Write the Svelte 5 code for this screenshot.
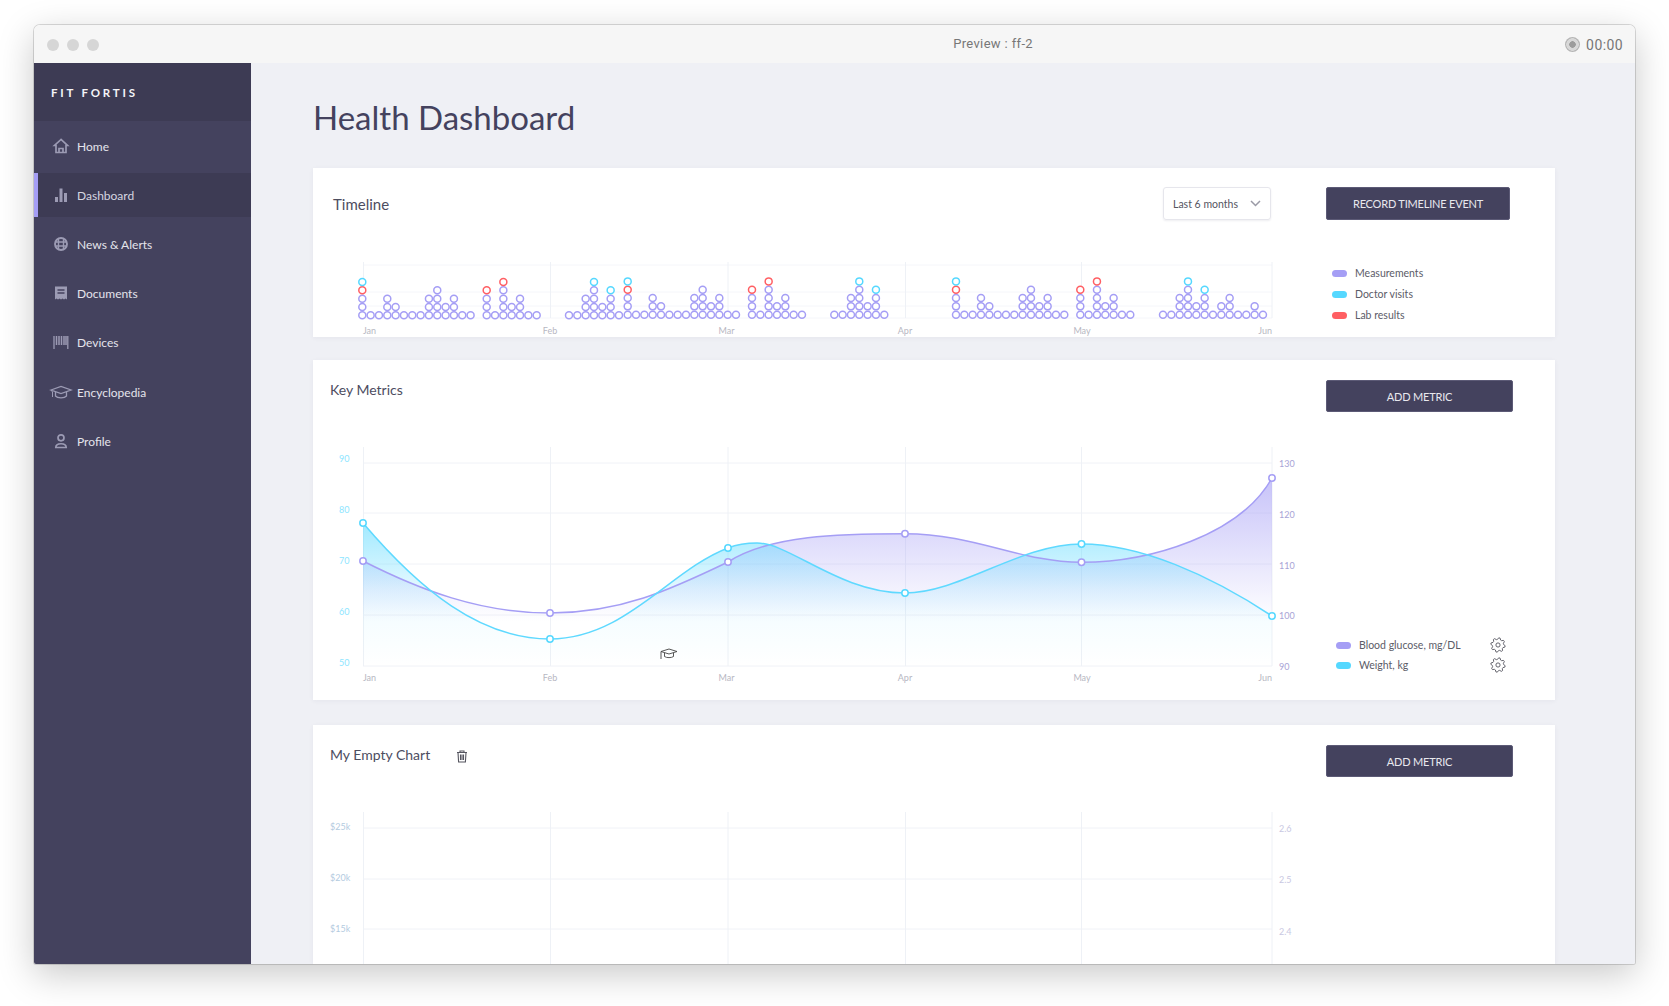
<script>
  const nav = ["Home", "Dashboard", "News & Alerts", "Documents", "Devices", "Encyclopedia", "Profile"];
  const months = [
    ["Jan", 363, "start"], ["Feb", 550, "middle"], ["Mar", 726.5, "middle"],
    ["Apr", 905, "middle"], ["May", 1082, "middle"], ["Jun", 1272, "end"]
  ];
  const gridX = [363.5, 550.5, 728, 905.5, 1081.5, 1272];

  const A = "3rc 1 1 3 2 1 1 1 3 4 2 3 1 1";
  const B = "3r 1 4r 2 3 1 1";
  const C = "1 1 3 4c 2 3c 1";
  const groups = [
    [362.3, 315.3, A], [486.7, 315.3, B], [569, 315.3, C],
    [627.7, 314.7, A], [752, 314.7, B], [834.3, 314.7, C],
    [956, 314.7, A], [1080.3, 314.7, B], [1163, 314.7, C + " 2 3 1 1 2 1"]
  ];
  const colors = { p: "#a59ef5", c: "#55d8ff", r: "#ff5f63" };
  const dots = [];
  for (const [sx, sy, pattern] of groups) {
    pattern.split(" ").forEach((col, i) => {
      const stack = "p".repeat(parseInt(col)) + col.replace(/\d/g, "");
      [...stack].forEach((k, j) => {
        dots.push({ x: sx + i * 8.33, y: sy - j * 8.33, color: colors[k] });
      });
    });
  }

  const purpleLine = "M363 561 C420 590 480 613 550 613 C620 613 670 590 728 562 C770 535 840 533.7 905 533.7 C975 533.7 1020 562.3 1081.5 562.3 C1150 562.3 1240 535 1272 478";
  const cyanLine = "M363 523 C420 590 480 639 550 639 C625 639 670 570 728 548 C738 544 748 543 757 543 C790 543 840 593 905 593 C960 593 1020 544 1081.5 544 C1140 544 1210 575 1272 616";
  const close = " L1272 666 L363 666 Z";
  const purplePts = [[363, 561], [550, 613], [728, 562], [905, 533.7], [1081.5, 562.3], [1272, 478]];
  const cyanPts = [[363, 523], [550, 639], [728, 548], [905, 593], [1081.5, 544], [1272, 616]];

  // eight-tooth gear outline
  const gearPts = [];
  for (let i = 0; i < 32; i++) {
    const a = ((i + 0.5) * Math.PI) / 16;
    const r = i % 4 < 2 ? 7.2 : 5.6;
    gearPts.push((8 + r * Math.cos(a)).toFixed(2) + "," + (8 + r * Math.sin(a)).toFixed(2));
  }
  const gearOutline = gearPts.join(" ");
</script>

{#snippet gear()}
  <svg class="gear" width="16" height="16" viewBox="0 0 16 16" fill="none" stroke="#55555f" stroke-width="0.9" stroke-linejoin="round">
    <circle cx="8" cy="8" r="2.100" />
    <polygon points={gearOutline} />
  </svg>
{/snippet}

{#snippet navIcon(name)}
  <svg class="nav-icon" width="24" height="16" viewBox="0 0 24 16" fill="none" stroke="#9c9bb4" stroke-width="1.700">
    {#if name === "Home"}
      <path d="M12 1.500 L5.500 7.500 H7 V14.500 H17 V7.500 H18.500 Z" />
      <path d="M10 14.500 V10.500 H14 V14.500" />
    {:else if name === "Dashboard"}
      <path d="M6 10h3v5H6zM10.500 1.500h3V15h-3zM15 6h3v9h-3z" fill="#9c9bb4" stroke="none" />
    {:else if name === "News & Alerts"}
      <circle cx="12" cy="8" r="6" stroke-width="1.900" />
      <path d="M6.500 6h11M6.500 10h11M9.500 2.500v11M14.500 2.500v11" stroke-width="1.400" />
    {:else if name === "Documents"}
      <path d="M6 1.500h12v13l-1.500-1-1.500 1-1.500-1-1.500 1-1.500-1-1.500 1-1.500-1-1.500 1z" fill="#9c9bb4" stroke="none" />
      <path d="M8.500 5h7M8.500 8h7" stroke="#44425e" stroke-width="1.400" />
    {:else if name === "Devices"}
      <path d="M5 2v13M18.800 2v13" stroke-width="1.300" />
      <path d="M7.500 2v9M10 2v9M12.500 2v9M15 2v9M17 2v9" stroke-width="1.500" />
    {:else if name === "Encyclopedia"}
      <path d="M2 6 L12 2.500 L22 6 L12 9.500 Z" stroke-width="1.300" />
      <path d="M6.500 8 V12 C8.500 14.500 15.500 14.500 17.500 12 V8" stroke-width="1.300" />
      <path d="M2 6 L3.500 8 V13" stroke-width="1" />
    {:else}
      <circle cx="12" cy="4.800" r="3" />
      <path d="M6.800 14.500 C6.800 9.500 17.200 9.500 17.200 14.500 Z" />
    {/if}
  </svg>
{/snippet}

<div class="window">
  <header class="titlebar">
    <div class="lights"><i></i><i></i><i></i></div>
    <span class="preview">Preview : ff-2</span>
    <div class="rec"><b></b><span>00:00</span></div>
  </header>

  <div class="shell">
    <aside class="sidebar">
      <div class="brand">FIT FORTIS</div>
      <nav>
        {#each nav as item}
          <div class="item" class:active={item === "Dashboard"}>
            {@render navIcon(item)}
            <span>{item}</span>
          </div>
        {/each}
      </nav>
    </aside>

    <main>
      <h1>Health Dashboard</h1>

      <section class="card timeline">
        <div class="head">
          <h2>Timeline</h2>
          <div class="select">
            <span>Last 6 months</span>
            <svg width="11" height="7" viewBox="0 0 11 7" fill="none" stroke="#9a9aa6" stroke-width="1.500"><path d="M1 1l4.500 4.500L10 1" /></svg>
          </div>
          <button class="wide">RECORD TIMELINE EVENT</button>
        </div>
        <div class="body">
          <svg class="chart" width="987" height="92" viewBox="313 245 987 92">
            {#each [265, 292, 306, 318] as y}
              <line x1="363" x2="1272" y1={y} y2={y} stroke="#f5f6fa" />
            {/each}
            {#each gridX as x}
              <line x1={x} x2={x} y1="262" y2="318" stroke="#eef1f6" />
            {/each}
            {#each dots as d}
              <circle cx={d.x} cy={d.y} r="3.500" fill="#fff" stroke={d.color} stroke-width="1.500" />
            {/each}
            {#each months as [label, x, anchor]}
              <text x={x} y="333.500" text-anchor={anchor} class="month">{label}</text>
            {/each}
          </svg>
          <ul class="legend">
            <li><i style="background:#a59ef5"></i>Measurements</li>
            <li><i style="background:#55d8ff"></i>Doctor visits</li>
            <li><i style="background:#ff5f63"></i>Lab results</li>
          </ul>
        </div>
      </section>

      <section class="card metrics">
        <div class="head">
          <h2>Key Metrics</h2>
          <button>ADD METRIC</button>
        </div>
        <div class="body">
          <svg class="chart" width="987" height="260" viewBox="313 440 987 260">
            <defs>
              <linearGradient id="fill-purple" gradientUnits="userSpaceOnUse" x1="0" x2="0" y1="478" y2="622">
                <stop offset="0" stop-color="#a59ef5" stop-opacity="0.62" />
                <stop offset="1" stop-color="#a59ef5" stop-opacity="0" />
              </linearGradient>
              <linearGradient id="fill-cyan" gradientUnits="userSpaceOnUse" x1="0" x2="0" y1="523" y2="666">
                <stop offset="0" stop-color="#55d8ff" stop-opacity="0.55" />
                <stop offset="0.3" stop-color="#55d8ff" stop-opacity="0.3" />
                <stop offset="0.47" stop-color="#55d8ff" stop-opacity="0.15" />
                <stop offset="0.64" stop-color="#55d8ff" stop-opacity="0.06" />
                <stop offset="1" stop-color="#55d8ff" stop-opacity="0" />
              </linearGradient>
            </defs>
            {#each [463, 513, 564, 615, 666] as y}
              <line x1="363" x2="1272" y1={y} y2={y} stroke="#f0f2f7" />
            {/each}
            {#each gridX as x}
              <line x1={x} x2={x} y1="447" y2="666" stroke="#eef1f6" />
            {/each}
            <path d={purpleLine + close} fill="url(#fill-purple)" />
            <path d={cyanLine + close} fill="url(#fill-cyan)" />
            <path d={purpleLine} fill="none" stroke="#a59ef5" stroke-width="1.500" />
            <path d={cyanLine} fill="none" stroke="#5fd9ff" stroke-width="1.500" />
            {#each purplePts as [x, y]}
              <circle cx={x} cy={y} r="3.200" fill="#fff" stroke="#a59ef5" stroke-width="1.500" />
            {/each}
            {#each cyanPts as [x, y]}
              <circle cx={x} cy={y} r="3.200" fill="#fff" stroke="#55d8ff" stroke-width="1.500" />
            {/each}
            {#each [["90", 462], ["80", 513], ["70", 564], ["60", 615], ["50", 666]] as [t, y]}
              <text x="339" y={y} class="axis-cyan">{t}</text>
            {/each}
            {#each [["130", 466.5], ["120", 517.5], ["110", 568.5], ["100", 618.5], ["90", 669.5]] as [t, y]}
              <text x="1279" y={y} class="axis-purple">{t}</text>
            {/each}
            {#each months as [label, x, anchor]}
              <text x={x} y="681" text-anchor={anchor} class="month">{label}</text>
            {/each}
            <g fill="none" stroke="#444" stroke-width="0.900">
              <path d="M661 651.500 L669 649 L677 651.500 L669 654 Z" />
              <path d="M664.500 653 V656.500 C666.500 658 671.500 658 673.500 656.500 V653" />
              <path d="M661 651.500 V659" />
            </g>
          </svg>
          <ul class="legend bottom">
            <li><i style="background:#a59ef5"></i><span>Blood glucose, mg/DL</span>{@render gear()}</li>
            <li><i style="background:#55d8ff"></i><span>Weight, kg</span>{@render gear()}</li>
          </ul>
        </div>
      </section>

      <section class="card empty">
        <div class="head">
          <h2>My Empty Chart
            <svg class="trash" width="12" height="13" viewBox="0 0 12 13" fill="none" stroke="#55555f" stroke-width="1.100">
              <path d="M1 2.500h10M4 2.500V1h4v1.500M2 2.500l.6 9.500h6.800l.6-9.500M4.500 4.500v5.500M6 4.500v5.500M7.500 4.500v5.500" />
            </svg>
          </h2>
          <button>ADD METRIC</button>
        </div>
        <div class="body">
          <svg class="chart" width="987" height="164" viewBox="313 800 987 164">
            {#each [828, 879, 929] as y}
              <line x1="363" x2="1272" y1={y} y2={y} stroke="#f0f2f7" />
            {/each}
            {#each gridX as x}
              <line x1={x} x2={x} y1="812" y2="964" stroke="#eef1f6" />
            {/each}
            {#each [["$25k", 829.5], ["$20k", 880.5], ["$15k", 931.5]] as [t, y]}
              <text x="330" y={y} class="axis-blue">{t}</text>
            {/each}
            {#each [["2.6", 831.5], ["2.5", 882.5], ["2.4", 934.5]] as [t, y]}
              <text x="1279" y={y} class="axis-pale">{t}</text>
            {/each}
          </svg>
        </div>
      </section>
    </main>
  </div>
</div>

<style>
  :global(body) {
    background: #fff;
    font-family: "Lato", "Noto Sans", sans-serif;
    min-height: 100vh;
  }

  .window {
    margin: 25px 34px 0 34px;
    height: 939px;
    display: flex;
    flex-direction: column;
    overflow: hidden;
    border-radius: 6px 6px 2px 2px;
    box-shadow: 0 0 0 1px rgba(0, 0, 0, 0.14), 0 10px 36px rgba(0, 0, 0, 0.22);
  }

  .titlebar {
    height: 38px;
    box-sizing: border-box;
    flex: none;
    background: #f6f6f6;
    display: flex;
    align-items: center;
    justify-content: space-between;
    padding: 2px 12px 0 13px;
    font-family: "Roboto", sans-serif;
    color: #777;
  }

  .lights {
    display: flex;
    gap: 8px;
  }

  .lights i {
    width: 12px;
    height: 12px;
    border-radius: 50%;
    background: #d6d6d6;
  }

  .preview {
    font-size: 13px;
    letter-spacing: 0.35px;
    margin: 0 0 3px 322px;
  }

  .rec {
    display: flex;
    align-items: center;
    gap: 6px;
    font-size: 14px;
    letter-spacing: 0.4px;
    margin-bottom: 1px;
  }

  .rec b {
    width: 15px;
    height: 15px;
    border-radius: 50%;
    background: radial-gradient(circle, #9c9c9c 0 3px, #d8d8d8 3.500px 6px, #b5b5b5 6.500px);
  }

  .shell {
    flex: 1;
    display: flex;
    min-height: 0;
  }

  .sidebar {
    width: 217px;
    flex: none;
    background: #44425e;
    color: #e4e4ec;
  }

  .brand {
    height: 58px;
    background: #3d3b54;
    color: #f4f4f8;
    display: flex;
    align-items: center;
    padding: 1px 0 0 17px;
    box-sizing: border-box;
    font-size: 11.500px;
    font-weight: 700;
    letter-spacing: 2.800px;
  }

  nav {
    padding-top: 3px;
    display: flex;
    flex-direction: column;
    gap: 5px;
  }

  .item {
    height: 44px;
    display: flex;
    align-items: center;
    gap: 4px;
    padding-left: 15px;
    font-size: 12px;
  }

  .item:nth-child(6) {
    margin-top: 1px;
  }

  .item.active {
    background: #3d3b54;
    box-shadow: inset 4px 0 0 #a59ef5;
    color: #d6d6e0;
  }

  main {
    flex: 1;
    min-width: 0;
    background: #eff0f5;
    padding: 0 80px 0 62px;
  }

  h1 {
    margin: 0;
    height: 105px;
    padding-top: 32px;
    box-sizing: border-box;
    font-size: 33px;
    line-height: 44px;
    font-weight: 400;
    color: #44425e;
  }

  .card {
    background: #fff;
    box-shadow: 0 1px 5px rgba(40, 40, 80, 0.05);
    margin-bottom: 23px;
    overflow: hidden;
  }

  .head {
    display: flex;
    align-items: flex-start;
    height: 32px;
    padding: 20px 42px 0 17px;
  }

  h2 {
    flex: 1;
    margin: 0;
    font-size: 14px;
    line-height: 20px;
    font-weight: 400;
    color: #4d4d5f;
    display: flex;
    align-items: center;
    gap: 26px;
  }

  .trash {
    margin-top: 2px;
  }

  button {
    width: 187px;
    height: 32px;
    border: 1px solid #5c5a76;
    border-radius: 2px;
    background: #44425e;
    color: #e8e8ee;
    font: 400 11px "Lato", sans-serif;
    letter-spacing: -0.2px;
  }

  .body {
    display: flex;
  }

  .chart {
    display: block;
    flex: none;
  }

  .timeline {
    height: 169px;
  }

  .timeline .head {
    height: 33px;
    padding: 19px 45px 0 20px;
    align-items: center;
  }

  .timeline h2 {
    font-size: 15px;
  }

  .select {
    width: 108px;
    height: 33px;
    box-sizing: border-box;
    border: 1px solid #e6e6ec;
    border-radius: 3px;
    box-shadow: 0 1px 2px rgba(40, 40, 80, 0.08);
    display: flex;
    align-items: center;
    justify-content: space-between;
    padding: 0 9px 0 9px;
    font-size: 10.500px;
    color: #55555f;
    margin-right: 55px;
  }

  .wide {
    width: 184px;
    height: 33px;
  }

  .timeline .body {
    margin-top: 25px;
  }

  .metrics {
    height: 340px;
    margin-bottom: 25px;
  }

  .metrics .body {
    margin-top: 28px;
    height: 260px;
  }

  .empty .body {
    margin-top: 23px;
  }

  .legend {
    list-style: none;
    margin: 0;
    padding: 21px 0 0 32px;
    font-size: 10.500px;
    color: #5c5c68;
    display: flex;
    flex-direction: column;
    gap: 7px;
  }

  .legend li {
    height: 14px;
    display: flex;
    align-items: center;
    gap: 8px;
  }

  .legend i {
    width: 15px;
    height: 7px;
    border-radius: 4px;
    flex: none;
  }

  .legend.bottom {
    padding: 198px 0 0 36px;
    gap: 6px;
    width: 206px;
    box-sizing: border-box;
  }

  .legend.bottom span {
    flex: 1;
  }

  text {
    font-family: "Lato", sans-serif;
    font-size: 9px;
  }

  .month {
    fill: #b7b7c2;
  }

  .axis-cyan {
    fill: #8ee6ff;
  }

  .axis-purple {
    fill: #a8a3d6;
  }

  .axis-blue {
    fill: #b4cbdf;
  }

  .axis-pale {
    fill: #c9c8e2;
  }
</style>
